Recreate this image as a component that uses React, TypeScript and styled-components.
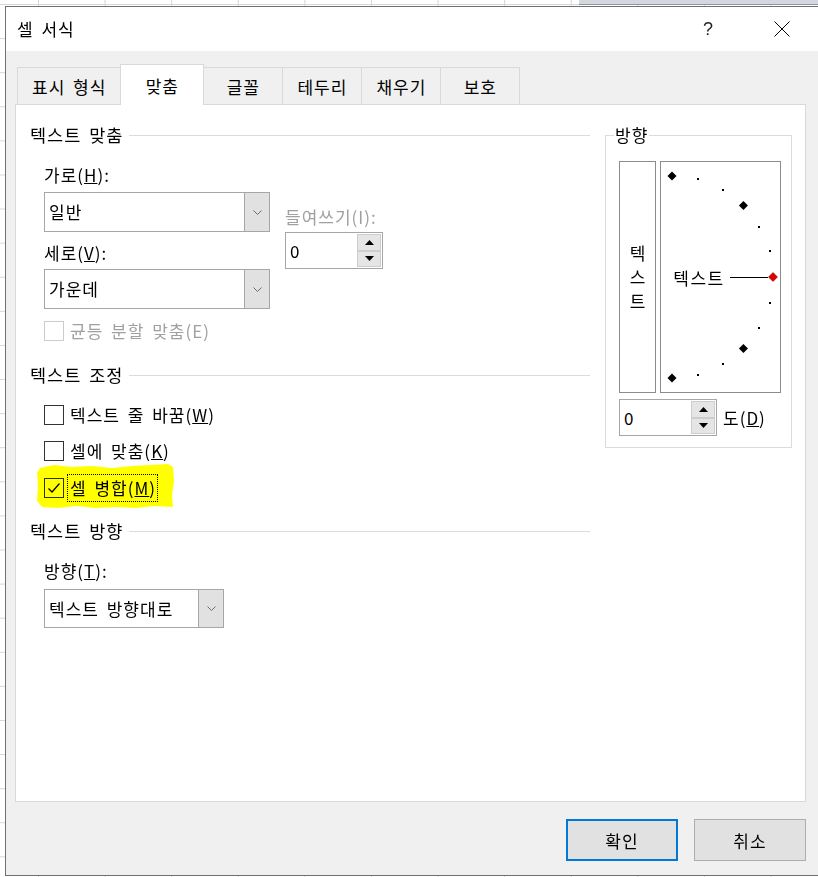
import React from "react";
import styled, { createGlobalStyle } from "styled-components";

const FONT = `"Noto Sans CJK KR", "Noto Sans", "Liberation Sans", sans-serif`;

const GlobalStyle = createGlobalStyle`
  html, body {
    margin: 0;
    padding: 0;
  }
  body {
    width: 818px;
    height: 877px;
    overflow: hidden;
    font-family: ${FONT};
    font-size: 17px;
    letter-spacing: 1px;
    word-spacing: 3px;
    color: #000;
  }
  * {
    box-sizing: border-box;
  }
`;

// excel sheet behind the dialog
const Desktop = styled.div`
  height: 877px;
  padding: 6px 0 0 5px;
  overflow: hidden;
  background:
    linear-gradient(#8d96a5, #8d96a5) 579px 4px / 239px 1px no-repeat,
    linear-gradient(#d3d7de, #d3d7de) 579px 0 / 239px 4px no-repeat,
    linear-gradient(to right, #d6d6d6 1px, transparent 1px) 38px 0 / 66.6px 100%,
    linear-gradient(#d6d6d6 1px, transparent 1px) 0 4px / 100% 34.1px,
    #fff;
`;

const Dialog = styled.div`
  width: 815px;
  height: 870px;
  border: 1px solid #707070;
  background: #f0f0f0;
  display: flex;
  flex-direction: column;
`;

const TitleBar = styled.div`
  height: 44px;
  background: #fff;
  display: flex;
  align-items: center;
  padding-left: 11px;
  line-height: 20px;
`;

const Title = styled.div`
  font-size: 17px;
`;

const HelpButton = styled.div`
  margin-left: auto;
  margin-right: 60px;
  font-size: 18px;
  font-family: "Liberation Sans", sans-serif;
  color: #222;
`;

const CloseButton = styled.div`
  display: flex;
  margin-right: 29px;
`;

const DialogBody = styled.div`
  flex: 1;
  display: flex;
  flex-direction: column;
  padding: 13px 13px 0 9px;
`;

const TabStrip = styled.div`
  display: flex;
  align-items: flex-end;
  height: 40px;
  padding-left: 2px;
`;

const Tab = styled.div<{ $active?: boolean }>`
  height: ${(p) => (p.$active ? 41 : 37)}px;
  min-width: ${(p) => (p.$active ? 84 : 80)}px;
  padding: 0 14px;
  margin-left: -1px;
  margin-bottom: ${(p) => (p.$active ? -1 : 0)}px;
  border: 1px solid #d9d9d9;
  border-bottom: none;
  background: ${(p) => (p.$active ? "#fff" : "#f0f0f0")};
  display: flex;
  align-items: center;
  justify-content: center;
  position: relative;
  z-index: ${(p) => (p.$active ? 2 : 1)};
  &:first-child {
    margin-left: 0;
  }
`;

const Panel = styled.div`
  height: 698px;
  border: 1px solid #d9d9d9;
  background: #fff;
  display: flex;
  gap: 15px;
  padding: 20px 13px 0 14px;
`;

const LeftColumn = styled.div`
  width: 560px;
  display: flex;
  flex-direction: column;
  line-height: 20px;
`;

const SectionHeading = styled.div<{ $top?: number }>`
  display: flex;
  align-items: center;
  margin-top: ${(p) => p.$top ?? 0}px;
  font-size: 17.5px;

  &::after {
    content: "";
    flex: 1;
    height: 1px;
    margin-left: 6px;
    background: #dcdcdc;
  }
`;

const Indented = styled.div<{ $top?: number }>`
  padding-left: 14px;
  margin-top: ${(p) => p.$top ?? 0}px;
`;

const AlignBlock = styled(Indented)`
  display: flex;
  gap: 15px;
`;

const FieldColumn = styled.div`
  width: 226px;
  display: flex;
  flex-direction: column;
`;

const IndentColumn = styled.div`
  padding-top: 42px;
  display: flex;
  flex-direction: column;
`;

const FieldLabel = styled.div<{ $top?: number; $disabled?: boolean }>`
  margin-top: ${(p) => p.$top ?? 0}px;
  color: ${(p) => (p.$disabled ? "#a0a0a0" : "#000")};
  line-height: 20px;
`;

const SelectBox = styled.div<{ $width: number; $height: number; $top?: number }>`
  width: ${(p) => p.$width}px;
  height: ${(p) => p.$height}px;
  margin-top: ${(p) => p.$top ?? 0}px;
  border: 1px solid #a6a6a6;
  background: #fff;
  display: flex;
`;

const SelectValue = styled.div`
  flex: 1;
  display: flex;
  align-items: center;
  padding-left: 4px;
`;

const SelectButton = styled.div`
  width: 25px;
  background: #e1e1e1;
  border-left: 1px solid #a6a6a6;
  display: flex;
  align-items: center;
  justify-content: center;
`;

const SpinBox = styled.div<{ $width: number; $top?: number }>`
  width: ${(p) => p.$width}px;
  height: 37px;
  margin-top: ${(p) => p.$top ?? 0}px;
  border: 1px solid #a6a6a6;
  background: #fff;
  display: flex;
`;

const SpinValue = styled.div`
  flex: 1;
  display: flex;
  align-items: center;
  padding-left: 4px;
`;

const SpinButtons = styled.div`
  width: 26px;
  padding: 1px;
  display: flex;
  flex-direction: column;
`;

const SpinButton = styled.div`
  flex: 1;
  background: #e5e5e5;
  border: 1px solid #cdcdcd;
  display: flex;
  align-items: center;
  justify-content: center;
`;

const CheckRow = styled(Indented)`
  position: relative;
  height: 20px;
  display: flex;
  align-items: center;
  gap: 6px;
`;

const CheckBox = styled.div<{ $disabled?: boolean }>`
  width: 20px;
  height: 20px;
  border: 1px solid ${(p) => (p.$disabled ? "#cccccc" : "#333")};
  background: transparent;
  display: flex;
  align-items: center;
  justify-content: center;
`;

const CheckLabel = styled.span<{ $disabled?: boolean; $focused?: boolean }>`
  color: ${(p) => (p.$disabled ? "#a0a0a0" : "#000")};
  ${(p) =>
    p.$focused &&
    `
    border: 1px dotted #000;
    padding: 3px 1px 3px 2px;
    margin: -4px -2px -4px -3px;
  `}
`;

// highlighter marker drawn over the checkbox row
const Highlight = styled.svg`
  position: absolute;
  left: 6px;
  top: -15px;
  mix-blend-mode: multiply;
  pointer-events: none;
`;

const DirectionFrame = styled.div`
  position: relative;
  width: 187px;
  height: 313px;
  margin-top: 10px;
  border: 1px solid #dcdcdc;
  padding: 25px 0 0 13px;
  line-height: 20px;
`;

const FrameLegend = styled.div`
  position: absolute;
  top: -11px;
  left: 8px;
  padding: 0 1px;
  background: #fff;
`;

const DirectionRow = styled.div`
  display: flex;
  gap: 4px;
`;

const VerticalText = styled.div`
  width: 37px;
  height: 232px;
  border: 1px solid #8c8c8c;
  display: flex;
  flex-direction: column;
  align-items: center;
  justify-content: center;
  line-height: 24px;
  letter-spacing: 0;
`;

const DialBox = styled.div`
  width: 121px;
  height: 232px;
  border: 1px solid #8c8c8c;
  display: flex;
`;

const DegreeRow = styled.div`
  display: flex;
  align-items: center;
  gap: 6px;
  margin-top: 6px;
`;

const Footer = styled.div`
  display: flex;
  justify-content: flex-end;
  gap: 16px;
  padding-top: 17px;
`;

const DialogButton = styled.div<{ $primary?: boolean }>`
  width: 112px;
  height: 42px;
  background: #e1e1e1;
  border: ${(p) => (p.$primary ? "2px solid #0078d7" : "1px solid #adadad")};
  display: flex;
  align-items: center;
  justify-content: center;
`;

const Chevron = () => (
  <svg width="9" height="5" viewBox="0 0 9 5">
    <path d="M0.5 0.5 L4.5 4.5 L8.5 0.5" fill="none" stroke="#6d6d6d" strokeWidth="1" />
  </svg>
);

const Arrow = ({ down }: { down?: boolean }) => (
  <svg width="9" height="5" viewBox="0 0 9 5">
    <path d={down ? "M0 0 L9 0 L4.5 5 Z" : "M0 5 L9 5 L4.5 0 Z"} fill="#000" />
  </svg>
);

const Select = ({ value, width, height, top }: { value: string; width: number; height: number; top?: number }) => (
  <SelectBox $width={width} $height={height} $top={top}>
    <SelectValue>{value}</SelectValue>
    <SelectButton>
      <Chevron />
    </SelectButton>
  </SelectBox>
);

const Spin = ({ width, top }: { width: number; top?: number }) => (
  <SpinBox $width={width} $top={top}>
    <SpinValue>0</SpinValue>
    <SpinButtons>
      <SpinButton>
        <Arrow />
      </SpinButton>
      <SpinButton>
        <Arrow down />
      </SpinButton>
    </SpinButtons>
  </SpinBox>
);

const Dial = () => {
  const cx = 11;
  const cy = 115;
  const r = 101;
  const pt = (deg: number) => {
    const a = (deg * Math.PI) / 180;
    return [cx + r * Math.cos(a), cy - r * Math.sin(a)];
  };
  const big = [90, 45, 0, -45, -90];
  const small = [75, 60, 30, 15, -15, -30, -60, -75];
  return (
    <svg width="119" height="230" viewBox="0 0 119 230">
      {small.map((d) => {
        const [x, y] = pt(d);
        return <rect key={d} x={Math.round(x) - 1} y={Math.round(y) - 1} width="2" height="2" fill="#000" />;
      })}
      {big.map((d) => {
        const [x, y] = pt(d);
        const s = 4.5;
        return (
          <polygon
            key={d}
            points={`${x},${y - s} ${x + s},${y} ${x},${y + s} ${x - s},${y}`}
            fill={d === 0 ? "#e00000" : "#000"}
            stroke={d === 0 ? "#600" : "none"}
            strokeWidth="0.5"
          />
        );
      })}
      <line x1="69" y1="115.5" x2="107" y2="115.5" stroke="#000" strokeWidth="1" />
      <text
        x="38"
        y="115"
        textAnchor="middle"
        dominantBaseline="central"
        fontSize="17"
        letterSpacing="1.5"
        fontFamily={FONT}
      >
        텍스트
      </text>
    </svg>
  );
};

export default function App() {
  return (
    <>
      <GlobalStyle />
      <Desktop>
        <Dialog>
          <TitleBar>
            <Title>셀 서식</Title>
            <HelpButton>?</HelpButton>
            <CloseButton>
              <svg width="16" height="16" viewBox="0 0 16 16">
                <path d="M0.5 0.5 L15.5 15.5 M15.5 0.5 L0.5 15.5" stroke="#000" strokeWidth="1" />
              </svg>
            </CloseButton>
          </TitleBar>
          <DialogBody>
            <TabStrip>
              <Tab>표시 형식</Tab>
              <Tab $active>맞춤</Tab>
              <Tab>글꼴</Tab>
              <Tab>테두리</Tab>
              <Tab>채우기</Tab>
              <Tab>보호</Tab>
            </TabStrip>
            <Panel>
              <LeftColumn>
                <SectionHeading>텍스트 맞춤</SectionHeading>
                <AlignBlock $top={20}>
                  <FieldColumn>
                    <FieldLabel>
                      가로(<u>H</u>):
                    </FieldLabel>
                    <Select value="일반" width={226} height={40} top={7} />
                    <FieldLabel $top={11}>
                      세로(<u>V</u>):
                    </FieldLabel>
                    <Select value="가운데" width={226} height={40} top={6} />
                  </FieldColumn>
                  <IndentColumn>
                    <FieldLabel $disabled>들여쓰기(I):</FieldLabel>
                    <Spin width={98} top={5} />
                  </IndentColumn>
                </AlignBlock>
                <CheckRow $top={12}>
                  <CheckBox $disabled />
                  <CheckLabel $disabled>균등 분할 맞춤(E)</CheckLabel>
                </CheckRow>

                <SectionHeading $top={24}>텍스트 조정</SectionHeading>
                <CheckRow $top={20}>
                  <CheckBox />
                  <CheckLabel>
                    텍스트 줄 바꿈(<u>W</u>)
                  </CheckLabel>
                </CheckRow>
                <CheckRow $top={16}>
                  <CheckBox />
                  <CheckLabel>
                    셀에 맞춤(<u>K</u>)
                  </CheckLabel>
                </CheckRow>
                <CheckRow $top={17}>
                  <CheckBox>
                    <svg width="16" height="16" viewBox="0 0 16 16">
                      <path d="M2.5 8.5 L6 12 L13.5 3.5" fill="none" stroke="#000" strokeWidth="1.2" />
                    </svg>
                  </CheckBox>
                  <CheckLabel $focused>
                    셀 병합(<u>M</u>)
                  </CheckLabel>
                  <Highlight width="140" height="48" viewBox="0 0 140 48">
                    <path
                      d="M4 5 L18 2 L36 4 L56 3 L76 5 L96 3 L114 2 L132 1 L137 4 L138 18 L136 32 L137 44 L118 43 L100 45 L80 44 L60 45 L40 43 L22 45 L6 44 L1 38 L2 22 L1 10 Z"
                      fill="#ffff00"
                    />
                  </Highlight>
                </CheckRow>

                <SectionHeading $top={23}>텍스트 방향</SectionHeading>
                <Indented $top={20}>
                  <FieldLabel>
                    방향(<u>T</u>):
                  </FieldLabel>
                  <Select value="텍스트 방향대로" width={180} height={39} top={8} />
                </Indented>
              </LeftColumn>

              <DirectionFrame>
                <FrameLegend>방향</FrameLegend>
                <DirectionRow>
                  <VerticalText>
                    <span>텍</span>
                    <span>스</span>
                    <span>트</span>
                  </VerticalText>
                  <DialBox>
                    <Dial />
                  </DialBox>
                </DirectionRow>
                <DegreeRow>
                  <Spin width={98} />
                  <span>
                    도(<u>D</u>)
                  </span>
                </DegreeRow>
              </DirectionFrame>
            </Panel>
            <Footer>
              <DialogButton $primary>확인</DialogButton>
              <DialogButton>취소</DialogButton>
            </Footer>
          </DialogBody>
        </Dialog>
      </Desktop>
    </>
  );
}
